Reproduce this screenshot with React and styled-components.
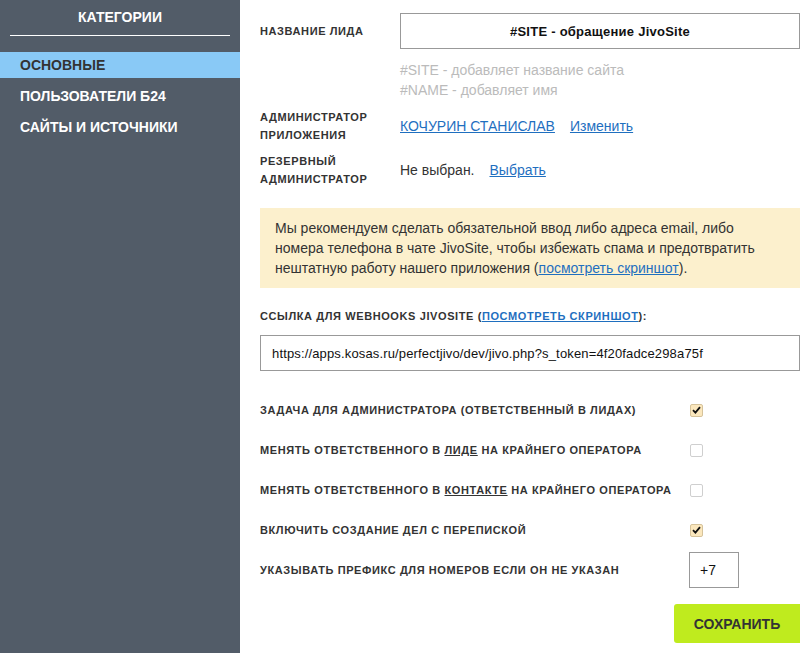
import React from "react";
import styled, { createGlobalStyle } from "styled-components";

const Global = createGlobalStyle`
  html, body { margin: 0; padding: 0; background: #fff; }
  body { font-family: "Liberation Sans", Arial, sans-serif; color: #333; }
  * { box-sizing: border-box; }
`;

const Layout = styled.div`
  display: flex;
  min-height: 653px;
  width: 800px;
  overflow: hidden;
`;

const Sidebar = styled.aside`
  width: 240px;
  flex: none;
  background: #525c68;
  padding-top: 9px;
`;

const SideTitle = styled.div`
  margin: 0 10px;
  padding-bottom: 9px;
  border-bottom: 1px solid #fff;
  color: #fff;
  text-align: center;
  font-weight: bold;
  font-size: 14px;
  line-height: 17px;
`;

const Menu = styled.nav`
  display: flex;
  flex-direction: column;
  gap: 5px;
  margin-top: 16px;
`;

const MenuItem = styled.div`
  height: 26px;
  display: flex;
  align-items: center;
  padding-left: 20px;
  font-weight: bold;
  font-size: 14px;
  color: ${(p) => (p.$active ? "#333" : "#fff")};
  background: ${(p) => (p.$active ? "#89c9f6" : "transparent")};
`;

const Main = styled.main`
  flex: 1;
  padding: 13px 0 10px 20px;
  display: flex;
  flex-direction: column;
`;

const FieldRow = styled.div`
  display: grid;
  grid-template-columns: 140px 1fr;
  align-items: center;
  margin-top: ${(p) => p.$mt || 0}px;
`;

const Label = styled.div`
  font-weight: bold;
  font-size: 11px;
  line-height: 18px;
  letter-spacing: 0.6px;
  text-transform: uppercase;
  color: #333;
`;

const TextInput = styled.div`
  height: 36px;
  border: 1px solid #999;
  display: flex;
  align-items: center;
  justify-content: ${(p) => (p.$center ? "center" : "flex-start")};
  padding: 0 11px;
  font-size: 13px;
  letter-spacing: ${(p) => (p.$bold ? "0.25px" : "0.15px")};
  font-weight: ${(p) => (p.$bold ? "bold" : "normal")};
  color: #111;
  background: #fff;
  white-space: nowrap;
`;

const Hints = styled.div`
  grid-column: 2;
  margin-top: 11px;
  font-size: 14px;
  line-height: 20px;
  color: #bbb;
`;

const Value = styled.div`
  display: flex;
  align-items: center;
  gap: 15px;
  font-size: 14px;
  color: #333;
`;

const Link = styled.a`
  color: #1f6fbf;
  text-decoration: underline;
  cursor: pointer;
`;

const Notice = styled.div`
  margin-top: 20px;
  background: #fcf0cd;
  padding: 10px 15px;
  font-size: 14px;
  line-height: 20px;
  color: #333;
`;

const BlockLabel = styled(Label)`
  margin-top: 20px;
  line-height: 17px;
`;

const UrlBox = styled(TextInput)`
  margin-top: 10px;
`;

const Options = styled.div`
  margin-top: 19px;
  display: flex;
  flex-direction: column;
`;

const OptionRow = styled.div`
  display: grid;
  grid-template-columns: 430px auto;
  align-items: center;
  height: 40px;
`;

const Box = styled.span`
  width: 13px;
  height: 13px;
  border-radius: 2px;
  border: 1px solid ${(p) => (p.$on ? "#d6c39b" : "#cfcfcf")};
  background: ${(p) => (p.$on ? "#fbe7bd" : "#fff")};
  display: inline-flex;
  align-items: center;
  justify-content: center;
`;

const Under = styled.span`
  text-decoration: underline;
`;

const Prefix = styled(TextInput)`
  width: 50px;
  margin-left: -1px;
  padding: 0 10px;
  font-size: 14px;
  letter-spacing: 0;
`;

const Footer = styled.div`
  display: flex;
  justify-content: flex-end;
  margin-top: 14px;
`;

const SaveButton = styled.button`
  width: 126px;
  height: 39px;
  border: none;
  border-radius: 3px 0 0 3px;
  background: #bfeb1e;
  color: #333;
  font-family: "Liberation Sans", Arial, sans-serif;
  font-weight: bold;
  font-size: 14px;
  cursor: pointer;
`;

function Check({ on }) {
  return (
    <Box $on={on}>
      {on && (
        <svg width="9" height="8" viewBox="0 0 9 8">
          <path d="M1 4.2 L3.4 6.6 L8 1.2" fill="none" stroke="#111" strokeWidth="1.8" />
        </svg>
      )}
    </Box>
  );
}

const options = [
  { text: "Задача для администратора (ответственный в лидах)", on: true },
  { text: ["Менять ответственного в ", "лиде", " на крайнего оператора"], on: false },
  { text: ["Менять ответственного в ", "контакте", " на крайнего оператора"], on: false },
  { text: "Включить создание дел с перепиской", on: true },
];

export default function App() {
  return (
    <>
      <Global />
      <Layout>
        <Sidebar>
          <SideTitle>КАТЕГОРИИ</SideTitle>
          <Menu>
            <MenuItem $active>ОСНОВНЫЕ</MenuItem>
            <MenuItem>ПОЛЬЗОВАТЕЛИ Б24</MenuItem>
            <MenuItem>САЙТЫ И ИСТОЧНИКИ</MenuItem>
          </Menu>
        </Sidebar>
        <Main>
          <FieldRow>
            <Label>Название лида</Label>
            <TextInput $center $bold>#SITE - обращение JivoSite</TextInput>
            <Hints>
              <div>#SITE - добавляет название сайта</div>
              <div>#NAME - добавляет имя</div>
            </Hints>
          </FieldRow>
          <FieldRow $mt={8}>
            <Label>Администратор<br />приложения</Label>
            <Value>
              <Link>КОЧУРИН СТАНИСЛАВ</Link>
              <Link>Изменить</Link>
            </Value>
          </FieldRow>
          <FieldRow $mt={8}>
            <Label>Резервный<br />администратор</Label>
            <Value>
              <span>Не выбран.</span>
              <Link>Выбрать</Link>
            </Value>
          </FieldRow>
          <Notice>
            Мы рекомендуем сделать обязательной ввод либо адреса email, либо
            номера телефона в чате JivoSite, чтобы избежать спама и предотвратить
            нештатную работу нашего приложения (<Link>посмотреть скриншот</Link>).
          </Notice>
          <BlockLabel>
            Ссылка для webhooks JivoSite (<Link>посмотреть скриншот</Link>):
          </BlockLabel>
          <UrlBox>https://apps.kosas.ru/perfectjivo/dev/jivo.php?s_token=4f20fadce298a75f</UrlBox>
          <Options>
            {options.map((o, i) => (
              <OptionRow key={i}>
                <Label>
                  {Array.isArray(o.text) ? (
                    <>
                      {o.text[0]}
                      <Under>{o.text[1]}</Under>
                      {o.text[2]}
                    </>
                  ) : (
                    o.text
                  )}
                </Label>
                <Check on={o.on} />
              </OptionRow>
            ))}
            <OptionRow>
              <Label>Указывать префикс для номеров если он не указан</Label>
              <Prefix>+7</Prefix>
            </OptionRow>
          </Options>
          <Footer>
            <SaveButton>СОХРАНИТЬ</SaveButton>
          </Footer>
        </Main>
      </Layout>
    </>
  );
}
